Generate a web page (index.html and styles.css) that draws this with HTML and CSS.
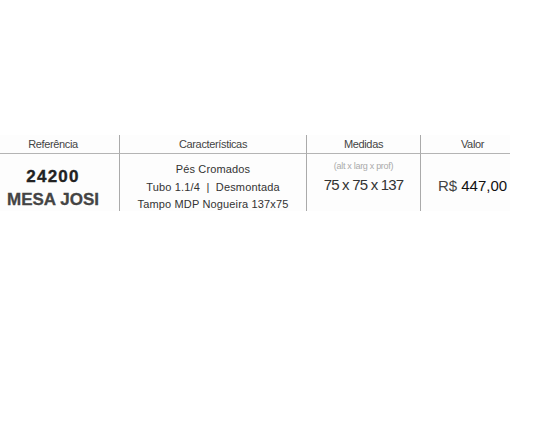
FILE: index.html
```html
<!DOCTYPE html>
<html lang="pt-BR">
<head>
<meta charset="utf-8">
<title>Mesa Josi</title>
<link rel="stylesheet" href="styles.css">
</head>
<body>
<div class="product-table">
  <div class="cell head first">Referência</div>
  <div class="cell head">Características</div>
  <div class="cell head">Medidas</div>
  <div class="cell head last">Valor</div>

  <div class="cell body first ref">
    <span class="code">24200</span>
    <span class="name">MESA JOSI</span>
  </div>
  <div class="cell body specs">
    <span>Pés Cromados</span>
    <span>Tubo 1.1/4 &nbsp;|&nbsp; Desmontada</span>
    <span>Tampo MDP Nogueira 137x75</span>
  </div>
  <div class="cell body dims">
    <span class="dims-label">(alt x larg x prof)</span>
    <span class="dims-value">75 x 75 x 137</span>
  </div>
  <div class="cell body last price">
    <span class="currency">R$</span>&nbsp;<span class="amount">447,00</span>
  </div>
</div>
</body>
</html>
```

FILE: styles.css
```css
html, body {
  margin: 0;
  padding: 0;
  background: #ffffff;
}

body {
  font-family: "Liberation Sans", Arial, sans-serif;
  color: #333;
  padding-top: 135px;
}

.product-table {
  display: grid;
  grid-template-columns: 119px 187px 114px 90px;
  grid-template-rows: 19px 57px;
  width: 510px;
  background: #fdfdfd;
}

.cell {
  border-left: 1px solid #aaaaaa;
  display: flex;
  flex-direction: column;
  align-items: center;
  text-align: center;
}

.cell.first {
  border-left: none;
  padding-right: 13px;
}

.cell.last {
  padding-left: 14px;
}

.head {
  border-bottom: 1px solid #b4b4b4;
  justify-content: center;
  font-size: 11px;
  letter-spacing: -0.35px;
  color: #444;
}

.body {
  color: #333;
}

.ref {
  padding-top: 13px;
  gap: 3px;
}

.code {
  font-weight: bold;
  font-size: 17px;
  letter-spacing: 1.2px;
  color: #222;
  line-height: 20px;
  -webkit-text-stroke: 0.35px #222;
}

.name {
  font-weight: bold;
  font-size: 17px;
  letter-spacing: 0;
  color: #444;
  line-height: 20px;
  -webkit-text-stroke: 0.3px #444;
}

.specs {
  padding-top: 7px;
  font-size: 11px;
  letter-spacing: 0.15px;
  line-height: 17.5px;
}

.dims {
  padding-top: 6px;
}

.dims-label {
  font-size: 9px;
  color: #aaa;
  letter-spacing: -0.3px;
  line-height: 12px;
}

.dims-value {
  font-size: 15px;
  letter-spacing: -0.8px;
  color: #333;
  line-height: 18px;
  margin-top: 4px;
}

.price {
  flex-direction: row;
  align-items: flex-start;
  justify-content: center;
  padding-top: 23px;
  font-size: 15px;
  line-height: 18px;
}

.currency {
  color: #444;
}

.amount {
  color: #111;
}
```
